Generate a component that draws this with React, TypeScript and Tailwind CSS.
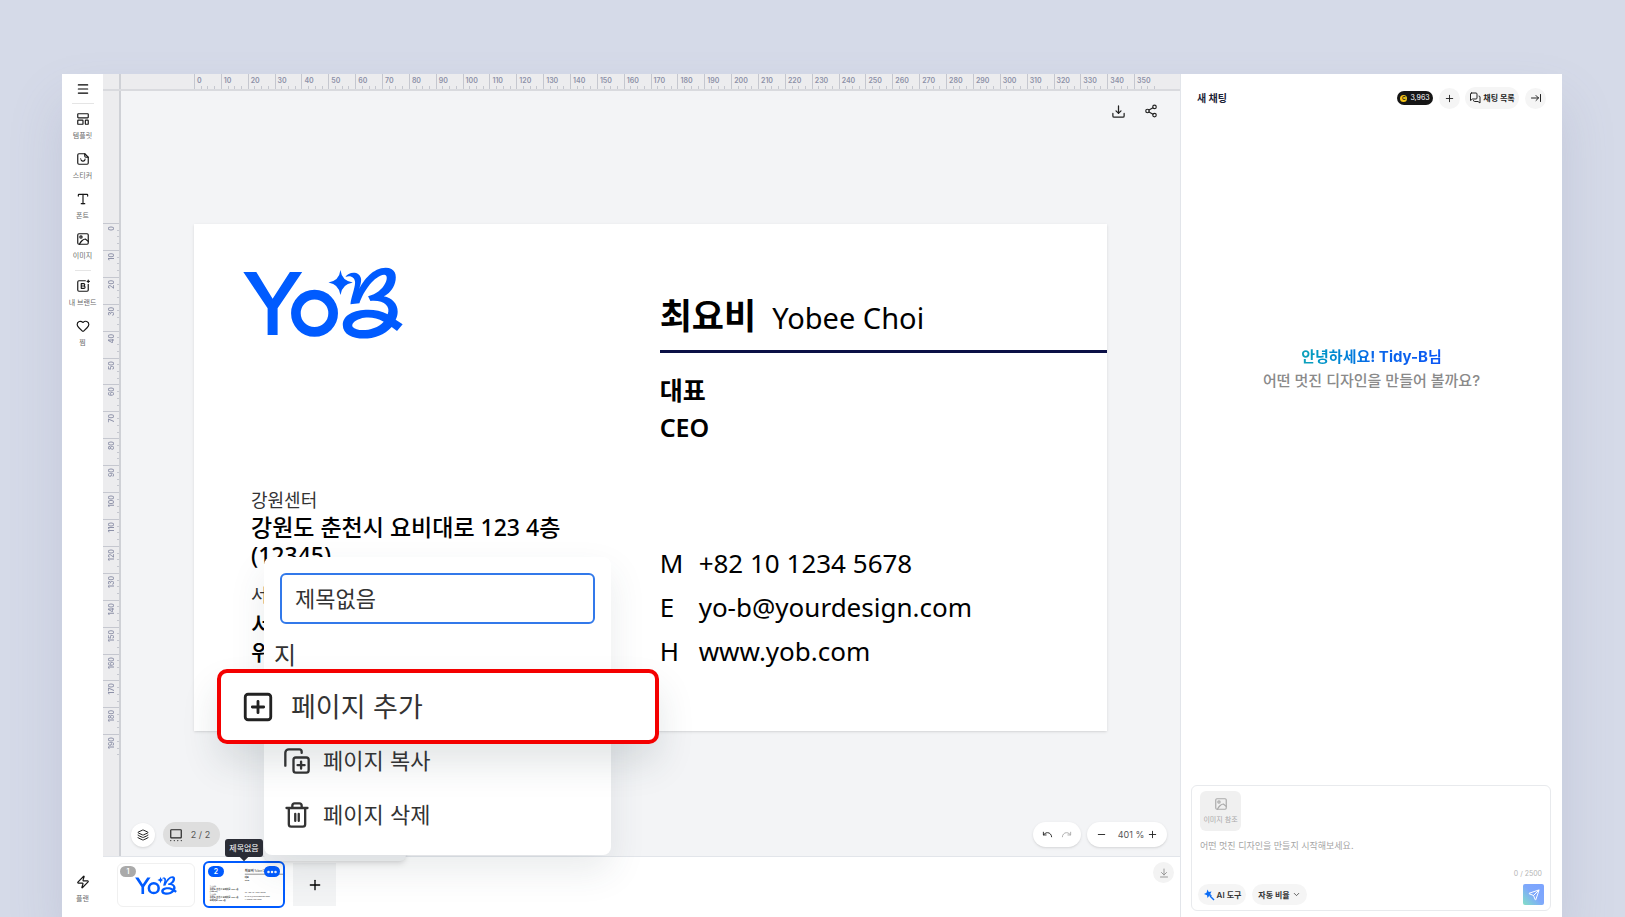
import { useState } from 'react';
import type { ReactNode } from 'react';
import { Menu, Type, Heart, Layers, Plus, Minus, Share2, Undo, Redo, ChevronDown, Zap, Send, Ellipsis } from 'lucide-react';

const H_MARKS = Array.from({ length: 36 }, (_, i) => i * 10);
const V_MARKS = Array.from({ length: 20 }, (_, i) => i * 10);

const CONTACTS = [
  { key: 'M', value: '+82 10 1234 5678' },
  { key: 'E', value: 'yo-b@yourdesign.com' },
  { key: 'H', value: 'www.yob.com' },
];

function Svg({ className, children }: { className: string; children: ReactNode }) {
  return (
    <svg viewBox="0 0 24 24" fill="none" stroke="currentColor" strokeWidth="2" strokeLinecap="round" strokeLinejoin="round" className={className} aria-hidden="true">
      {children}
    </svg>
  );
}

const TemplateIcon = () => (
  <Svg className="w-[14px] h-[14px]">
    <rect x="3" y="3" width="18" height="7" rx="1" />
    <rect x="3" y="14" width="9" height="7" rx="1" />
    <rect x="16" y="14" width="5" height="7" rx="1" />
  </Svg>
);

const StickerIcon = () => (
  <Svg className="w-[14px] h-[14px]">
    <path d="M5 3h10l6 6v10a2 2 0 0 1-2 2H5a2 2 0 0 1-2-2V5a2 2 0 0 1 2-2Z" />
    <path d="M15 3v4a2 2 0 0 0 2 2h4" />
    <path d="M9 14c1.500 2.500 4.500 2.500 6 0M8 11.500v.5M15.500 12v.5" />
  </Svg>
);

function PictureIcon({ className }: { className: string }) {
  return (
    <Svg className={className}>
      <rect x="3" y="3" width="18" height="18" rx="2" />
      <circle cx="8.500" cy="8.500" r="2" />
      <path d="M6 21 C8 16 13 12 16 12 L21 16" />
    </Svg>
  );
}

const BrandIcon = () => (
  <Svg className="w-[14px] h-[14px]">
    <path d="M16 3H5a2 2 0 0 0-2 2v14a2 2 0 0 0 2 2h14a2 2 0 0 0 2-2V9" />
    <path d="M9 8h4a2 2 0 0 1 0 4H9zM9 12h4.500a2 2 0 0 1 0 4H9z" />
    <path d="M21 2v4M19 4h4" />
  </Svg>
);

const CopyPlusIcon = () => (
  <Svg className="w-[28px] h-[28px]">
    <rect x="9" y="9" width="13" height="13" rx="2" />
    <path d="M2 16V5a3 3 0 0 1 3-3h9a2 2 0 0 1 2 2v1M15.500 12.500v6M12.500 15.500h6" />
  </Svg>
);

const TrashIcon = () => (
  <Svg className="w-[28px] h-[28px]">
    <path d="M3 6h18M5 6v14a2 2 0 0 0 2 2h10a2 2 0 0 0 2-2V6M8 6V4a2 2 0 0 1 2-2h4a2 2 0 0 1 2 2v2M10.500 11v6M13.500 11v6" />
  </Svg>
);

function LogoMark({ className }: { className: string }) {
  return (
    <svg viewBox="39 36 481 216" className={className} role="img" aria-label="YoB">
      <path fill="#005bff" d="M40 51H79L128 131L180 51H217L143 160V240H113V160Z" />
      <circle cx="254" cy="175" r="56" fill="none" stroke="#005bff" strokeWidth="29" />
      <path fill="#005bff" d="M332 45Q336 78 369 82Q336 87 332 120Q328 87 296 82Q328 78 332 45Z" />
      <path fill="#005bff" d="M347 66C355 50 390 46 394 72C395 82 391 94 388 102C402 75 430 38 468 38C496 38 503 60 496 83C490 104 476 117 462 124C488 128 504 148 504 170C504 180 501 188 498 194L519 208L502 228L486 216C464 240 434 251 402 251C368 251 339 238 339 210C339 180 372 164 416 164C436 164 456 168 474 178C484 154 462 134 422 138L415 124C440 117 458 103 467 84C474 70 472 58 463 59C434 62 401 108 389 145L362 148C364 125 375 103 376 83C376 67 362 60 347 66ZM462 200C438 186 410 186 392 191C372 197 364 208 369 216C382 232 438 228 462 200Z" />
    </svg>
  );
}

function SideItem({ label, children }: { label: string; children: ReactNode }) {
  return (
    <button className="w-full h-[40px] flex flex-col items-center gap-1 text-[#171717]">
      {children}
      <span className="text-[7px] leading-[12px] text-[#6b6b6b] whitespace-nowrap">{label}</span>
    </button>
  );
}

function Sidebar() {
  return (
    <nav className="w-[41px] flex-shrink-0 bg-white flex flex-col items-center pt-2">
      <button aria-label="메뉴" className="h-[13px] flex items-center">
        <Menu className="w-[14px] h-[14px]" />
      </button>
      <div className="w-[22px] h-px bg-[#e5e5e5] mt-2 mb-2" />
      <SideItem label="템플릿"><TemplateIcon /></SideItem>
      <SideItem label="스티커"><StickerIcon /></SideItem>
      <SideItem label="폰트"><Type className="w-[14px] h-[14px]" /></SideItem>
      <SideItem label="이미지"><PictureIcon className="w-[14px] h-[14px]" /></SideItem>
      <div className="w-4 h-px bg-[#e5e5e5] mb-2 -mt-[2px]" />
      <SideItem label="내 브랜드"><BrandIcon /></SideItem>
      <SideItem label="찜"><Heart className="w-[14px] h-[14px]" /></SideItem>
      <div className="mt-auto pb-[2px]">
        <SideItem label="플랜"><Zap className="w-[14px] h-[14px]" /></SideItem>
      </div>
    </nav>
  );
}

function HorizontalRuler() {
  return (
    <div className="h-[17px] flex bg-[#ececee] border-b-2 border-[#d9dade] flex-shrink-0">
      <div className="w-[18px] border-r-2 border-[#cfd1d6]" />
      <div className="flex flex-1 pl-[73px] pr-[19px]">
        {H_MARKS.map(mark => (
          <div key={mark} className="flex-1 min-w-0 border-l border-[#c5c7cf] flex flex-col justify-between">
            <span className="pl-[2px] pt-px text-[7px] leading-[11px] font-semibold text-[#8d91a8]">{mark}</span>
            <div className="flex justify-evenly h-[3px]">
              <i className="w-px bg-[#c5c7cf]" />
              <i className="w-px bg-[#c5c7cf]" />
              <i className="w-px bg-[#c5c7cf]" />
            </div>
          </div>
        ))}
      </div>
    </div>
  );
}

function VerticalRuler() {
  return (
    <div className="w-[18px] flex flex-col bg-[#ececee] border-r-2 border-[#cfd1d6] pt-[132px] flex-shrink-0">
      <div className="h-[538px] flex flex-col">
        {V_MARKS.map(mark => (
          <div key={mark} className="flex-1 min-h-0 border-t border-[#c5c7cf] flex justify-between">
            <span className="ml-1 pb-[2px] text-[7px] leading-[10px] font-semibold text-[#8d91a8] [writing-mode:vertical-rl] rotate-180 self-start">{mark}</span>
            <div className="flex flex-col justify-evenly w-[2px]">
              <i className="h-px bg-[#c5c7cf]" />
              <i className="h-px bg-[#c5c7cf]" />
              <i className="h-px bg-[#c5c7cf]" />
            </div>
          </div>
        ))}
      </div>
    </div>
  );
}

function BusinessCard() {
  return (
    <article className="min-h-[507px] bg-white shadow-sm flex text-black font-['Noto_Sans','Noto_Sans_CJK_KR',sans-serif]">
      <div className="w-[51%] pl-[57px] pt-[43px]">
        <LogoMark className="w-[160px] h-[72px] -ml-2" />
        <p className="mt-[149px] text-[18px] leading-6 text-[#333]">강원센터</p>
        <p className="mt-px text-[23px] leading-7 font-medium">
          강원도 춘천시 요비대로 123 4층
          <br />
          (12345)
        </p>
        <p className="mt-[14px] text-[18px] leading-6 text-[#333]">서</p>
        <p className="mt-[3px] text-[23px] leading-7 font-medium">
          서
          <br />
          위
        </p>
      </div>
      <div className="flex-1 pt-[69px]">
        <h1 className="h-[60px] flex items-baseline gap-4 border-b-[3px] border-[#0b1046]">
          <span className="text-[35px] leading-[46px] font-bold">최요비</span>
          <span className="text-[29px] font-normal">Yobee Choi</span>
        </h1>
        <p className="mt-[19px] text-[25px] leading-[37px] font-bold">
          대표
          <br />
          <span className="font-semibold">CEO</span>
        </p>
        <dl className="mt-[95px] text-[26px] leading-[44px]">
          {CONTACTS.map(c => (
            <div key={c.key} className="flex">
              <dt className="w-[39px]">{c.key}</dt>
              <dd>{c.value}</dd>
            </div>
          ))}
        </dl>
      </div>
    </article>
  );
}

function CardPreview() {
  return (
    <svg viewBox="0 0 913 507" className="w-full" aria-hidden="true">
      <g fill="#333" fontFamily="'Noto Sans', 'Noto Sans CJK KR', sans-serif">
        <text x="466" y="110" fontSize="38" fontWeight="700">최요비</text>
        <text x="580" y="110" fontSize="30">Yobee Choi</text>
        <rect x="466" y="127" width="447" height="6" />
        <text x="466" y="178" fontSize="26" fontWeight="700">대표</text>
        <text x="466" y="215" fontSize="26" fontWeight="700">CEO</text>
        <text x="57" y="283" fontSize="20">강원센터</text>
        <text x="57" y="315" fontSize="25" fontWeight="700">강원도 춘천시 요비대로 123 4층</text>
        <text x="57" y="343" fontSize="25" fontWeight="700">(12345)</text>
        <text x="57" y="378" fontSize="20">강원센터</text>
        <text x="57" y="410" fontSize="25" fontWeight="700">강원도 춘천시 요비대로 123 4층</text>
        <text x="57" y="440" fontSize="25" fontWeight="700">요비대로 123 4층</text>
        {CONTACTS.map((c, i) => (
          <text key={c.key} x="466" y={350 + i * 44} fontSize="26">{c.key}  {c.value}</text>
        ))}
      </g>
    </svg>
  );
}

function PageMenu() {
  const [title, setTitle] = useState('제목없음');

  return (
    <>
      <div className="absolute left-[161px] bottom-[56px] w-[142px] h-5 rounded-md bg-[#f0f1f3] shadow-md" />
      <div className="absolute left-[161px] bottom-[62px] w-[347px] pt-4 pb-[13px] rounded-lg bg-white shadow-[0_16px_36px_rgba(50,65,80,0.1)] text-[#333]">
        <div className="px-4">
          <input
            aria-label="페이지 제목"
            value={title}
            onChange={e => setTitle(e.target.value)}
            className="w-full h-[51px] border-2 border-[#3279ea] rounded-md px-[13px] pb-1 text-[22px] outline-none bg-white"
          />
        </div>
        <p className="h-[45px] pl-[10px] pt-[18px] text-[24px] leading-[27px]">지</p>
        <button className="relative z-10 -mx-[47px] w-[442px] h-[75px] flex items-center gap-4 pl-5 bg-white border-4 border-[#f40000] rounded-[10px] shadow-[0_20px_36px_rgba(40,60,70,0.13)] text-[27px]">
          <Svg className="w-[34px] h-[34px] text-[#222]">
            <rect x="3" y="3" width="18" height="18" rx="2" />
            <path d="M8 12h8M12 8v8" />
          </Svg>
          <span className="pt-1">페이지 추가</span>
        </button>
        <button className="-mt-[10px] w-full h-[54px] flex items-center gap-3 pl-[19px] text-[22px]">
          <CopyPlusIcon />
          페이지 복사
        </button>
        <button className="w-full h-[54px] flex items-center gap-3 pl-[19px] text-[22px]">
          <TrashIcon />
          페이지 삭제
        </button>
      </div>
    </>
  );
}

function CanvasControls() {
  return (
    <div className="mt-auto mb-[9px] px-[10px] pr-[13px] flex items-center text-[#222]">
      <button aria-label="레이어" className="w-6 h-6 rounded-full bg-white shadow flex items-center justify-center">
        <Layers className="w-3 h-3" />
      </button>
      <button className="ml-2 w-[57px] h-[25px] rounded-full bg-[#dedede] flex items-center justify-center gap-2 pr-1 text-[9px] text-[#555]">
        <Svg className="w-[14px] h-[14px] text-[#222]">
          <rect x="3" y="3" width="18" height="14" rx="1" />
          <path d="M3 21.500h.1M9 21.500h.1M15 21.500h.1M21 21.500h.1" />
        </Svg>
        2 / 2
      </button>
      <div className="ml-auto w-[48px] h-[25px] rounded-full bg-white shadow flex items-center justify-center gap-2">
        <button aria-label="실행 취소"><Undo className="w-[11px] h-[11px]" /></button>
        <button aria-label="다시 실행" className="text-[#aaa]"><Redo className="w-[11px] h-[11px]" /></button>
      </div>
      <div className="ml-[6px] w-[80px] h-[25px] rounded-full bg-white shadow flex items-center justify-between px-[9px] text-[9px] text-[#555]">
        <button aria-label="축소" className="text-[#222]"><Minus className="w-[11px] h-[11px]" /></button>
        <span className="ml-2">401 %</span>
        <button aria-label="확대" className="text-[#222]"><Plus className="w-[11px] h-[11px]" /></button>
      </div>
    </div>
  );
}

function PageStrip() {
  return (
    <div className="h-[61px] flex-shrink-0 bg-white border-t border-[#e2e5ea] flex items-start pl-[14px] pr-[6px] pt-1">
      <button className="relative mt-[2px] w-[78px] h-[44px] rounded-md border border-[#f0f0f0] flex items-center justify-center">
        <span className="absolute left-[2px] top-[2px] w-4 h-[11px] rounded-full bg-[#aaa] text-white text-[7px] leading-[11px] font-semibold">1</span>
        <LogoMark className="w-[42px] h-[19px]" />
      </button>
      <button className="relative ml-2 w-[82px] h-[47px] rounded-md border-[2px] border-[#005bff] bg-white">
        <CardPreview />
        <span className="absolute left-[3px] top-[3px] w-4 h-[11px] rounded-full bg-[#005bff] text-white text-[7px] leading-[11px] font-semibold">2</span>
        <span className="absolute right-[3px] top-[3px] w-4 h-[11px] rounded-full bg-[#005bff] text-white flex items-center justify-center">
          <Ellipsis className="w-3 h-3" strokeWidth={3} />
        </span>
        <span className="absolute z-20 -top-[24px] left-5 w-[38px] h-[18px] rounded-[3px] bg-[#2b2d36] text-white text-[8px] leading-[18px] whitespace-nowrap after:absolute after:left-[16px] after:top-[15px] after:w-[6px] after:h-[6px] after:rotate-45 after:bg-[#2b2d36]">
          제목없음
        </span>
      </button>
      <button aria-label="페이지 추가" className="ml-2 mt-[2px] w-[43px] h-[43px] bg-[#f3f4f5] flex items-center justify-center">
        <Plus className="w-4 h-4" strokeWidth={2} />
      </button>
      <button aria-label="접기" className="ml-auto mt-px w-[21px] h-[21px] rounded-full bg-[#f3f3f3] text-[#999] flex items-center justify-center">
        <Svg className="w-3 h-3">
          <path d="M12 4v12M7 11l5 5 5-5M5 20h14" />
        </Svg>
      </button>
    </div>
  );
}

function Editor() {
  return (
    <main className="relative flex-1 min-w-0 flex flex-col">
      <HorizontalRuler />
      <div className="flex flex-1">
        <VerticalRuler />
        <div className="flex-1 min-w-0 flex flex-col bg-[#f3f4f6]">
          <div className="h-[133px] flex justify-end items-start gap-[18px] pt-[13px] pr-[22px] text-[#222]">
            <button aria-label="다운로드">
              <Svg className="w-[15px] h-[15px]">
                <path d="M12 3v12M8 11l4 4 4-4M3 15v4a2 2 0 0 0 2 2h14a2 2 0 0 0 2-2v-4" />
              </Svg>
            </button>
            <button aria-label="공유"><Share2 className="w-[14px] h-[14px]" /></button>
          </div>
          <div className="px-[73px]">
            <BusinessCard />
          </div>
          <CanvasControls />
        </div>
      </div>
      <PageStrip />
      <PageMenu />
    </main>
  );
}

function ChatPanel() {
  return (
    <aside className="w-[382px] flex-shrink-0 bg-white border-l border-[#e2e5ea] flex flex-col">
      <header className="flex items-center pl-4 pr-4 pt-[13px] text-[#222]">
        <h2 className="text-[10px] font-bold text-[#1b2236] mr-auto">새 채팅</h2>
        <span className="w-9 h-[14px] rounded-full bg-[#161616] flex items-center justify-center gap-[3px] text-[7px] text-white">
          <span className="w-[7px] h-[7px] rounded-full bg-[#f5c518] text-[#161616] text-[5px] leading-[7px] font-bold text-center">C</span>
          3,963
        </span>
        <button aria-label="새 채팅 시작" className="ml-[6px] w-[21px] h-[21px] rounded-full bg-[#f5f5f5] flex items-center justify-center">
          <Plus className="w-[11px] h-[11px]" />
        </button>
        <button className="ml-[5px] w-[54px] h-[22px] rounded-full bg-[#f5f5f5] flex items-center justify-center gap-[2px] text-[8px] font-semibold whitespace-nowrap">
          <Svg className="w-[12px] h-[12px]">
            <path d="M5 2h9a2 2 0 0 1 2 2v8a2 2 0 0 1-2 2H7l-4 3V4a2 2 0 0 1 2-2ZM20 8a2 2 0 0 1 2 2v12l-4-3h-7a2 2 0 0 1-2-2" />
          </Svg>
          채팅 목록
        </button>
        <button aria-label="패널 닫기" className="ml-[6px] w-[21px] h-[21px] rounded-full bg-[#f5f5f5] flex items-center justify-center">
          <Svg className="w-[12px] h-[12px]">
            <path d="M3 12h14M12 7l5 5-5 5M21 5v14" />
          </Svg>
        </button>
      </header>

      <div className="pt-[236px] text-center text-[15px] leading-6">
        <p className="font-bold"><span className="bg-gradient-to-r from-[#12a3b8] via-[#0c68e8] to-[#0b55f5] bg-clip-text text-transparent">안녕하세요! Tidy-B님</span></p>
        <p className="font-medium text-[#8a8a8a]">어떤 멋진 디자인을 만들어 볼까요?</p>
      </div>

      <form onSubmit={e => e.preventDefault()} className="mt-auto mb-[6px] ml-[10px] mr-[11px] h-[126px] rounded-md border border-[#e8eaed] pt-[5px] px-[6px] pb-[5px] flex flex-col">
        <button type="button" className="ml-[2px] w-[41px] h-10 flex-shrink-0 rounded-md bg-[#f0f0f0] text-[#aaa] text-[7px] flex flex-col items-center justify-center gap-1 whitespace-nowrap">
          <PictureIcon className="w-[14px] h-[14px]" />
          이미지 참조
        </button>
        <textarea
          aria-label="프롬프트"
          placeholder="어떤 멋진 디자인을 만들지 시작해보세요."
          className="ml-[2px] mt-[7px] h-6 flex-1 resize-none outline-none text-[9px] leading-4 placeholder:text-[#a5a5a5]"
        />
        <span className="self-end pr-[2px] text-[7px] leading-3 text-[#b5b5b5]">0 / 2500</span>
        <div className="mt-1 flex items-center text-[8px] font-semibold text-[#333]">
          <button type="button" className="w-[48px] h-[21px] rounded-full bg-[#f5f5f5] flex items-center justify-center gap-[2px] whitespace-nowrap">
            <svg viewBox="0 0 24 24" className="w-3 h-3" aria-hidden="true">
              <path fill="#0b6cf5" d="M9 1l2.500 5L17 5l-2.500 5L18 14l-5.500-.5L9 18l-1-5.500L2 10l5-2.500z" />
              <path stroke="#0b6cf5" strokeWidth="3" d="M14 14l8 8" />
            </svg>
            AI 도구
          </button>
          <button type="button" className="ml-[6px] w-[55px] h-[21px] rounded-full bg-[#f5f5f5] flex items-center justify-center gap-[2px] whitespace-nowrap">
            자동 비율
            <ChevronDown className="w-[9px] h-[9px]" />
          </button>
          <button type="submit" aria-label="보내기" className="ml-auto w-[21px] h-[21px] rounded-[2px] bg-gradient-to-tr from-[#84dfc4] via-[#7fa8fb] to-[#7ba3ff] text-white flex items-center justify-center">
            <Send className="w-3 h-3" />
          </button>
        </div>
      </form>
    </aside>
  );
}

export default function App() {
  return (
    <div className="min-h-screen flex bg-[#d5dae8] pt-[74px] pl-[62px] pr-[63px] overflow-hidden font-[Inter,'Noto_Sans_CJK_KR',sans-serif]">
      <div className="flex-1 min-w-0 flex shadow-[0_30px_50px_rgba(110,115,155,0.18)]">
        <Sidebar />
        <Editor />
        <ChatPanel />
      </div>
    </div>
  );
}
